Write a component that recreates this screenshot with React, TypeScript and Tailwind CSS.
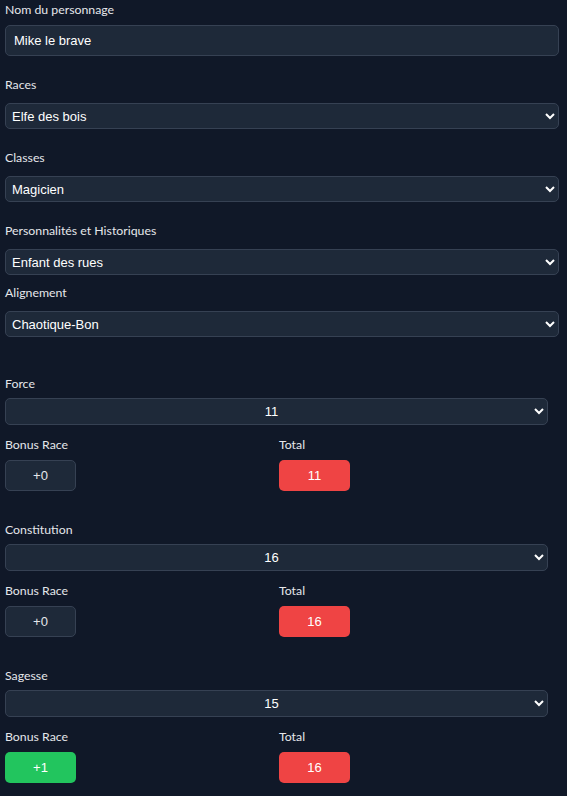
import React from 'react'

const label = "block h-5 leading-5 text-[12.3px] text-gray-200 font-['Lato',sans-serif]"
const selectBase = "block rounded-[5px] border border-gray-700 bg-gray-800 text-white text-[13px] pl-[2px] scheme-dark font-['Liberation_Sans',Arial,sans-serif] outline-none"
const select = selectBase + ' w-[554px] h-[26px] mt-2'

function Stat({ name, value, bonus, total }: { name: string; value: string; bonus: string; total: string }) {
  const positive = bonus !== '+0'
  return (
    <div>
      <label className={label}>{name}</label>
      <select defaultValue={value} className={selectBase + ' mt-1 w-[543px] h-[27px] text-center'}>
        <option>{value}</option>
      </select>
      <div className="flex mt-[10px]">
        <div className="w-[274px]">
          <span className={label}>Bonus Race</span>
          <div className={`mt-[5px] w-[71px] h-[31px] rounded-[5px] flex items-center justify-center text-[13px] font-['Liberation_Sans',Arial,sans-serif] ${positive ? 'bg-[#22c55e] text-white' : 'bg-gray-800 border border-gray-700 text-gray-200'}`}>{bonus}</div>
        </div>
        <div>
          <span className={label}>Total</span>
          <div className="mt-[5px] w-[71px] h-[31px] rounded-[5px] flex items-center justify-center text-[13px] bg-[#ef4444] text-white font-['Liberation_Sans',Arial,sans-serif]">{total}</div>
        </div>
      </div>
    </div>
  )
}

export default function App() {
  return (
    <div className="min-h-screen bg-gray-900 px-[5px] pb-4">
      <label className={label}>Nom du personnage</label>
      <input defaultValue="Mike le brave" className="mt-[5px] block w-[554px] h-[31px] rounded-[5px] border border-gray-700 bg-gray-800 text-white text-[13px] px-2 font-['Liberation_Sans',Arial,sans-serif] outline-none" />

      <label className={label + ' mt-[19px]'}>Races</label>
      <select defaultValue="Elfe des bois" className={select}><option>Elfe des bois</option></select>

      <label className={label + ' mt-[19px]'}>Classes</label>
      <select defaultValue="Magicien" className={select}><option>Magicien</option></select>

      <label className={label + ' mt-[19px]'}>Personnalités et Historiques</label>
      <select defaultValue="Enfant des rues" className={select}><option>Enfant des rues</option></select>

      <label className={label + ' mt-2'}>Alignement</label>
      <select defaultValue="Chaotique-Bon" className={select}><option>Chaotique-Bon</option></select>

      <div className="mt-[37px] flex flex-col gap-[29px]">
        <Stat name="Force" value="11" bonus="+0" total="11" />
        <Stat name="Constitution" value="16" bonus="+0" total="16" />
        <Stat name="Sagesse" value="15" bonus="+1" total="16" />
      </div>
    </div>
  )
}
